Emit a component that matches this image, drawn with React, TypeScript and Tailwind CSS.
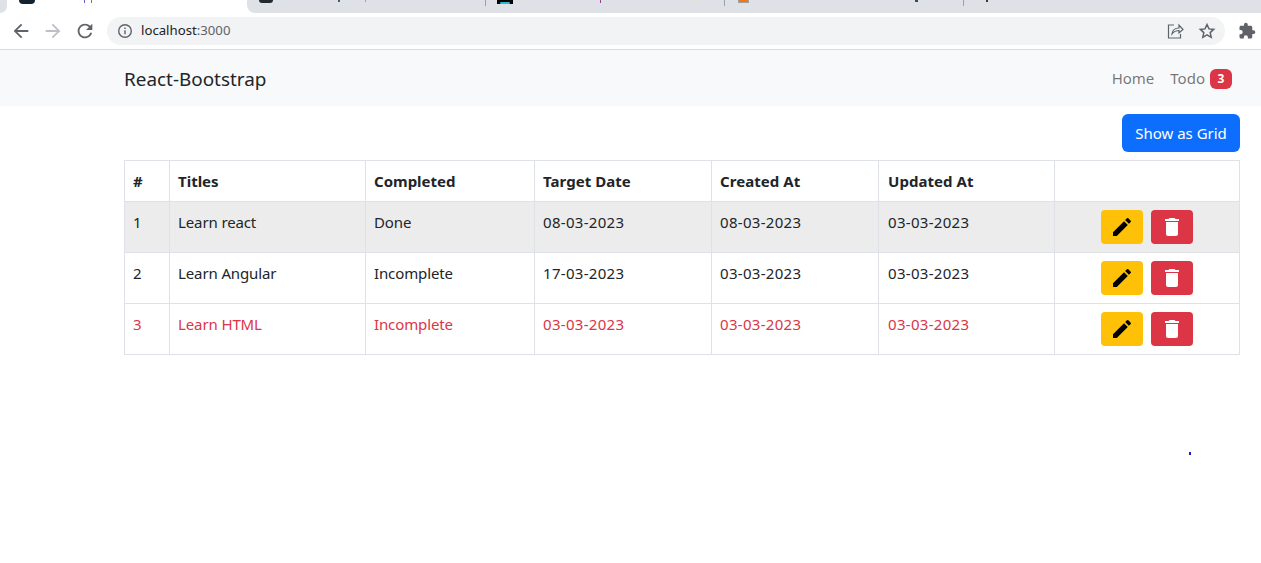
import React from "react";

function Pencil() {
  return (
    <svg width="24" height="24" viewBox="0 0 24 24" fill="#000">
      <path d="M3 17.25V21h3.75L17.81 9.94l-3.75-3.75L3 17.25zM20.71 7.04a1 1 0 0 0 0-1.41l-2.34-2.34a1 1 0 0 0-1.41 0l-1.83 1.83 3.75 3.75 1.83-1.83z" />
    </svg>
  );
}

function Trash() {
  return (
    <svg width="24" height="24" viewBox="0 0 24 24" fill="#fff">
      <path d="M6 19c0 1.1.9 2 2 2h8c1.1 0 2-.9 2-2V7H6v12zM19 4h-3.5l-1-1h-5l-1 1H5v2h14V4z" />
    </svg>
  );
}

const rows = [
  ["1", "Learn react", "Done", "08-03-2023", "08-03-2023", "03-03-2023"],
  ["2", "Learn Angular", "Incomplete", "17-03-2023", "03-03-2023", "03-03-2023"],
  ["3", "Learn HTML", "Incomplete", "03-03-2023", "03-03-2023", "03-03-2023"],
];

const heads = ["#", "Titles", "Completed", "Target Date", "Created At", "Updated At", ""];
const widths = ["w-[45px]", "w-[196px]", "w-[169px]", "w-[177px]", "w-[167px]", "w-[176px]", "w-[185px]"];

export default function App() {
  return (
    <div className="min-h-[563px] bg-white font-['Noto_Sans','Open_Sans',sans-serif] text-[#212529] overflow-hidden">
      {/* tab strip */}
      <div className="h-[13px] bg-white flex overflow-hidden">
        <div className="w-[7px] bg-[#dee1e6] rounded-br-lg" />
        <div className="w-[240px] flex items-start">
          <div className="ml-[12px] w-[16px] h-[4px] bg-[#12222e] rounded-b-sm" />
          <div className="ml-[49px] w-px h-[3px] bg-[#6a5acd]" />
          <div className="ml-[6px] w-px h-[3px] bg-[#8a6a9a]" />
        </div>
        <div className="flex-1 bg-[#dee1e6] rounded-bl-lg flex items-start">
          <div className="ml-[12px] w-[14px] h-[3px] bg-[#24292e] rounded-b-full" />
          <div className="ml-[65px] w-[2px] h-[2px] bg-[#4a5a7a]" />
          <div className="ml-[25px] w-px h-[2px] bg-[#e8923a]" />
          <div className="ml-[119px] w-px h-[6px] bg-[#9aa0a6]" />
          <div className="ml-[11px] w-[16px] h-[4px] bg-black flex items-end justify-center">
            <div className="w-[10px] h-[2px] bg-[#2bb8d0] rounded-sm" />
          </div>
          <div className="ml-[87px] w-px h-[3px] bg-[#9a3d9a]" />
          <div className="ml-[93px] w-px h-[3px] bg-[#e8e0d0]" />
          <div className="ml-[29px] w-px h-[6px] bg-[#9aa0a6]" />
          <div className="ml-[13px] w-[11px] h-[3px] bg-[#f07818] border-x border-b border-[#a0a0a0]" />
          <div className="ml-[166px] w-[3px] h-[2px] bg-[#3a4a5a]" />
          <div className="ml-[45px] w-px h-[6px] bg-[#9aa0a6]" />
          <div className="ml-[22px] w-[2px] h-[2px] bg-[#3a3a3a]" />
        </div>
      </div>
      {/* toolbar */}
      <div className="h-[36px] box-content bg-white border-b border-[#d8dadd] flex items-center pl-[10px]">
        <svg className="shrink-0" width="22" height="22" viewBox="0 0 24 24" fill="#5f6368">
          <path d="M20 11H7.830l5.590-5.590L12 4l-8 8 8 8 1.410-1.410L7.830 13H20v-2z" />
        </svg>
        <svg className="shrink-0 ml-[10px]" width="22" height="22" viewBox="0 0 24 24" fill="#bdc1c6">
          <path d="M12 4l-1.410 1.410L16.170 11H4v2h12.170l-5.580 5.590L12 20l8-8z" />
        </svg>
        <svg className="shrink-0 ml-[10px]" width="22" height="22" viewBox="0 0 24 24" fill="#5f6368">
          <path d="M17.650 6.350C16.200 4.900 14.210 4 12 4c-4.420 0-7.990 3.580-7.990 8s3.570 8 7.990 8c3.730 0 6.840-2.550 7.730-6h-2.080c-.82 2.330-3.040 4-5.650 4-3.310 0-6-2.690-6-6s2.690-6 6-6c1.660 0 3.140.69 4.220 1.780L13 11h7V4l-2.350 2.350z" />
        </svg>
        <div className="shrink-0 ml-[11px] h-[28px] w-[1118px] rounded-full bg-[#f1f3f4] flex items-center pl-[10px] pr-[9px]">
          <svg className="shrink-0" width="16" height="16" viewBox="0 0 16 16" fill="none" stroke="#5f6368" strokeWidth="1.4">
            <circle cx="8" cy="8" r="6.300" />
            <path d="M8 7.200v4M8 4.400v1.500" />
          </svg>
          <span className="ml-[8px] text-[13.2px] text-[#202124]">
            localhost<span className="text-[#5f6368]">:3000</span>
          </span>
          <svg className="shrink-0 ml-auto" width="18" height="18" viewBox="0 0 18 18" fill="none" stroke="#5f6368" strokeWidth="1.2">
            <path d="M8 3H2.500v13h12v-4" />
            <path d="M6 12c.5-4 3-6 7-6V3l4 4.500L13 11V8.500c-3 0-5 1-7 3.500z" />
          </svg>
          <svg className="shrink-0 ml-[14px]" width="18" height="18" viewBox="0 0 18 18" fill="none" stroke="#5f6368" strokeWidth="1.5">
            <path d="M9 2.500l2 4.400 4.700.5-3.500 3.200 1 4.700L9 12.900l-4.200 2.400 1-4.700L2.300 7.400 7 6.900z" />
          </svg>
        </div>
        <svg className="shrink-0 ml-[13px]" width="18" height="18" viewBox="0 0 24 24" fill="#5f6368">
          <path d="M20.500 11H19V7c0-1.100-.9-2-2-2h-4V3.500C13 2.120 11.880 1 10.500 1S8 2.120 8 3.500V5H4c-1.100 0-1.990.9-1.990 2v3.800H3.500c1.490 0 2.700 1.210 2.700 2.700s-1.210 2.700-2.700 2.700H2V20c0 1.100.9 2 2 2h3.800v-1.500c0-1.490 1.210-2.700 2.700-2.700 1.490 0 2.700 1.210 2.700 2.700V22H17c1.100 0 2-.9 2-2v-4h1.500c1.380 0 2.500-1.120 2.500-2.500S21.880 11 20.500 11z" />
        </svg>
      </div>
      {/* navbar */}
      <div className="h-[56px] bg-[#f8f9fa] flex items-center pl-[124px] pr-[29px]">
        <span className="text-[18.9px] leading-[30px] mt-[2px] text-[#212529]">React-Bootstrap</span>
        <div className="ml-auto flex items-center text-[15px] text-[#0000008c]">
          <span>Home</span>
          <span className="ml-[16px]">Todo</span>
          <span className="ml-[5px] mt-[2px] h-[20px] w-[22px] rounded-[6px] bg-[#dc3545] text-white text-[12px] font-bold flex items-center justify-center">3</span>
        </div>
      </div>
      {/* content */}
      <div className="pl-[124px] pr-[21px]">
        <div className="flex justify-end pt-[8px] pb-[8px]">
          <button className="h-[38px] w-[118px] rounded-[6px] bg-[#0d6efd] text-white text-[15px]">Show as Grid</button>
        </div>
        <table className="w-[1116px] table-fixed border-collapse text-[15px] leading-[24px]">
          <thead>
            <tr className="h-[41px]">
              {heads.map((h, i) => (
                <th key={i} className={`${widths[i]} border border-[#dee2e6] px-[8px] text-left font-bold align-middle ${i === 5 ? "pl-[9px]" : ""} ${i >= 3 && i <= 5 ? "tracking-[0.05px]" : ""}`}>{h}</th>
              ))}
            </tr>
          </thead>
          <tbody>
            {rows.map((r, ri) => (
              <tr key={ri} className={`h-[51px] ${ri === 0 ? "bg-[#ececec]" : ""} ${ri === 2 ? "text-[#dc3545]" : ""}`}>
                {r.map((c, i) => (
                  <td key={i} className={`border border-[#dee2e6] pr-[8px] pt-[8px] align-top ${i === 5 ? "pl-[9px]" : "pl-[8px]"} ${i >= 3 ? "tracking-[0.3px]" : "tracking-[-0.12px]"}`}>{c}</td>
                ))}
                <td className="border border-[#dee2e6] align-middle">
                  <div className="flex justify-center gap-[8px]">
                    <div className="w-[42px] h-[34px] rounded-[4px] bg-[#ffc107] flex items-center justify-center"><Pencil /></div>
                    <div className="w-[42px] h-[34px] rounded-[4px] bg-[#dc3545] flex items-center justify-center"><Trash /></div>
                  </div>
                </td>
              </tr>
            ))}
          </tbody>
        </table>
      </div>
      <div className="flex justify-end pr-[70px] pt-[97px]">
        <div className="w-[2px] h-[3px] bg-[#1a1ad0]" />
      </div>
    </div>
  );
}
